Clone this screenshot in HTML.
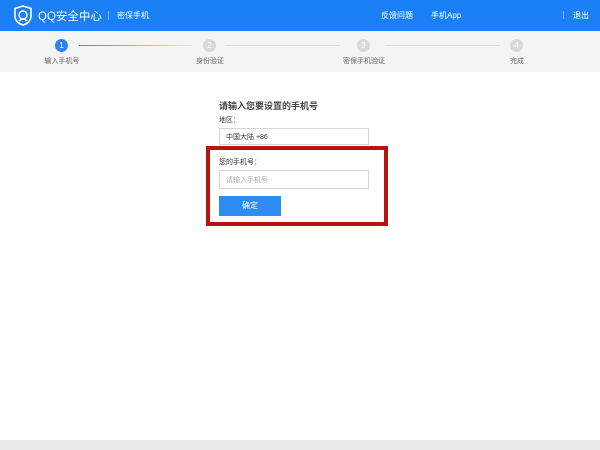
<!DOCTYPE html>
<html><head><meta charset="utf-8"><style>
body{margin:0;width:600px;height:450px;position:relative;background:#fff;font-family:"Liberation Sans","Noto Sans CJK SC",sans-serif;overflow:hidden}
.a{position:absolute}
.hdr{left:0;top:0;width:600px;height:31px;background:#1b7ff5;color:#fff}
.steps{left:0;top:31px;width:600px;height:41px;background:#f4f4f4}
.c{width:13px;height:13px;border-radius:50%;background:#d9d9d9;color:#fff;font-size:8px;text-align:center;line-height:13px}
.lab{font-size:7px;color:#666;text-align:center;width:80px}
.ln{height:1px;background:#ddd;top:45px}
.inp{border:1px solid #d5d5d5;height:17px;left:219px;font-size:7px;line-height:17px;padding-left:6px;box-sizing:border-box;width:150px}
</style></head><body>
<div class="a hdr">
 <svg class="a" style="left:13px;top:5px" width="20" height="21" viewBox="0 0 20 21"><path d="M10 1 L18 3.5 V11 C18 16 14 19 10 20 C6 19 2 16 2 11 V3.5Z" fill="none" stroke="#fff" stroke-width="1.6"/><circle cx="10" cy="10" r="4" fill="none" stroke="#fff" stroke-width="1.4"/><path d="M6 16 Q10 12 14 16" fill="none" stroke="#fff" stroke-width="1.3"/></svg>
 <div class="a" style="left:38px;top:8px;font-size:11.5px">QQ安全中心</div>
 <div class="a" style="left:108px;top:11px;width:1px;height:9px;background:#7fb4f8"></div>
 <div class="a" style="left:117px;top:10px;font-size:8px">密保手机</div>
 <div class="a" style="left:381px;top:10px;font-size:8px">反馈问题</div>
 <div class="a" style="left:431px;top:10px;font-size:8px">手机App</div>
 <div class="a" style="left:563px;top:11px;width:1px;height:8px;background:#7fb4f8"></div>
 <div class="a" style="left:573px;top:10px;font-size:8px">退出</div>
</div>
<div class="a steps"></div>
<div class="a ln" style="left:79px;width:113px;background:linear-gradient(90deg,#3b8ff0,#dde6f2)"></div>
<div class="a ln" style="left:225px;width:115px"></div>
<div class="a ln" style="left:385px;width:115px"></div>
<div class="a c" style="left:55px;top:39px;background:#2a85f0">1</div>
<div class="a c" style="left:203px;top:39px">2</div>
<div class="a c" style="left:357px;top:39px">3</div>
<div class="a c" style="left:510px;top:39px">4</div>
<div class="a lab" style="left:22px;top:56px">输入手机号</div>
<div class="a lab" style="left:170px;top:56px">身份验证</div>
<div class="a lab" style="left:324px;top:56px">密保手机验证</div>
<div class="a lab" style="left:477px;top:56px">完成</div>
<div class="a" style="left:219px;top:99px;font-size:9px;color:#444;font-weight:bold">请输入您要设置的手机号</div>
<div class="a" style="left:219px;top:115px;font-size:7px;color:#333">地区：</div>
<div class="a inp" style="top:128px;color:#333">中国大陆 +86</div>
<div class="a" style="left:219px;top:157px;font-size:7px;color:#333">您的手机号：</div>
<div class="a inp" style="top:170px;height:19px;line-height:19px;color:#aaa">请输入手机号</div>
<div class="a" style="left:219px;top:196px;width:62px;height:20px;background:#2d8bf2;color:#fff;font-size:8px;text-align:center;line-height:20px">确定</div>
<div class="a" style="left:206px;top:146px;width:182px;height:80px;border:4px solid #b8150f;box-sizing:border-box"></div>
<div class="a" style="left:0;top:440px;width:600px;height:10px;background:#eaeaea"></div>
</body></html>
